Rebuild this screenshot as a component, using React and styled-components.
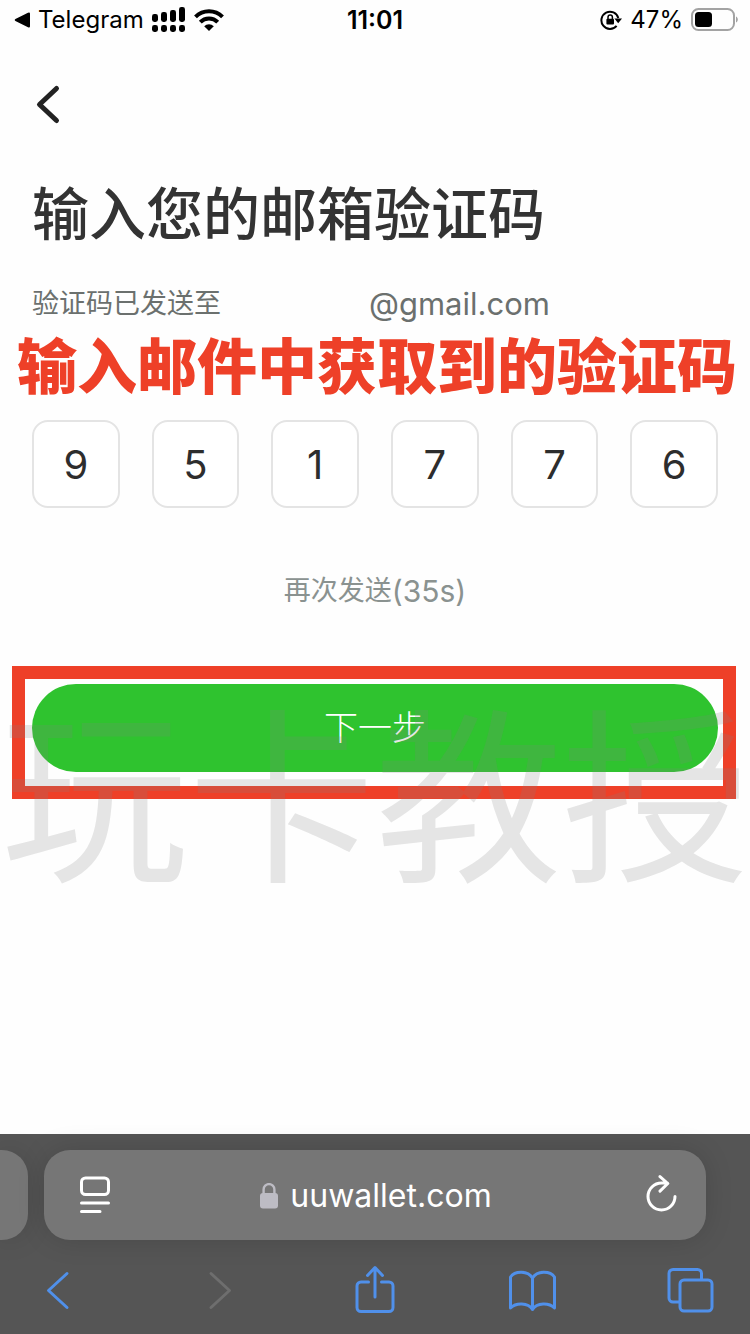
import React, { useState } from "react";
import styled, { createGlobalStyle } from "styled-components";

const GlobalStyle = createGlobalStyle`
  * {
    box-sizing: border-box;
  }

  body {
    margin: 0;
    background: #fefefe;
    font-family: Inter, "Noto Sans CJK SC", sans-serif;
  }

  button {
    padding: 0;
    border: 0;
    background: none;
    font: inherit;
    cursor: pointer;
  }

  svg {
    display: block;
  }
`;

const Screen = styled.div`
  min-height: 100vh;
  display: flex;
  flex-direction: column;
`;

// Status bar
const StatusBar = styled.header`
  display: grid;
  grid-template-columns: 1fr auto 1fr;
  align-items: center;
  height: 40px;
  padding: 0 12px;
  font-size: 24px;
  line-height: 40px;
  color: #000;
`;

const StatusGroup = styled.div`
  display: flex;
  align-items: center;
  justify-content: ${({ $end }) => ($end ? "flex-end" : "flex-start")};
  gap: 8px;
`;

const Clock = styled.time`
  font-size: 25px;
  font-weight: 600;
`;

// Page content
const Content = styled.main`
  position: relative;
  flex: 1;
`;

const BackButton = styled.button`
  display: block;
  margin: 44px 0 0 28px;
  color: #222;
`;

const Title = styled.h1`
  margin: 56px 32px 0;
  font-size: 57px;
  font-weight: 500;
  line-height: 68px;
  color: #333;
`;

const SentTo = styled.p`
  display: flex;
  margin: 35px 32px 0;
  font-size: 27px;
  line-height: 40px;
  color: #6b706e;
`;

const MaskedName = styled.span`
  width: 148px;
`;

const Email = styled.span`
  font-size: 31px;
`;

const Callout = styled.p`
  margin: 13px 0 0 4px;
  text-align: center;
  white-space: nowrap;
  font-size: 60px;
  font-weight: 900;
  line-height: 60px;
  color: #ee4028;
`;

const CodeRow = styled.div`
  display: grid;
  grid-template-columns: repeat(6, 1fr);
  gap: 32px;
  margin: 23px 32px 0;
`;

const CodeInput = styled.input`
  width: 100%;
  height: 88px;
  padding: 0;
  border: 2px solid #e4e4e4;
  border-radius: 16px;
  outline: none;
  background: #fff;
  text-align: center;
  font-family: inherit;
  font-size: 40px;
  color: #2d2d2d;
`;

const Resend = styled.button`
  display: flex;
  margin: 63px auto 0;
  font-size: 27px;
  line-height: 40px;
  color: #8a9290;
`;

const Countdown = styled.span`
  font-size: 30px;
`;

const Highlight = styled.div`
  margin: 55px 14px 0 12px;
  padding: 5px 5px 14px 7px;
  border: 13px solid #ee4028;
`;

const NextButton = styled.button`
  display: block;
  width: 100%;
  height: 88px;
  padding-bottom: 6px;
  border-radius: 44px;
  background: #2fc32f;
  font-size: 34px;
  font-weight: 300;
  color: #fff;
`;

const Watermark = styled.div`
  position: absolute;
  top: 624px;
  left: 0;
  right: 0;
  text-align: center;
  white-space: nowrap;
  font-size: 187px;
  line-height: 272px;
  color: rgba(128, 128, 128, 0.2);
  pointer-events: none;
`;

// Browser bar
const BrowserBar = styled.footer`
  padding: 16px 0 20px;
  background: #555;
`;

const AddressRow = styled.div`
  display: flex;
  gap: 16px;
  padding-right: 44px;
`;

const NextTabEdge = styled.div`
  width: 28px;
  border-radius: 0 26px 26px 0;
  background: #767676;
  box-shadow: 0 0 28px rgba(0, 0, 0, 0.14);
`;

const AddressBar = styled.div`
  flex: 1;
  display: flex;
  align-items: center;
  justify-content: space-between;
  height: 90px;
  padding: 0 27px 0 33px;
  border-radius: 26px;
  background: #767676;
  box-shadow: 0 0 28px rgba(0, 0, 0, 0.14);
`;

const BarButton = styled.button`
  color: #fff;
`;

const Address = styled.button`
  display: flex;
  align-items: center;
  gap: 12px;
  padding: 2px 4px 0 0;
  font-size: 32px;
  line-height: 40px;
  color: #fff;
`;

const Toolbar = styled.nav`
  display: flex;
  justify-content: space-between;
  padding: 24px 36px 0 33px;
`;

const ToolButton = styled.button`
  width: 48px;
  height: 50px;
  color: ${({ disabled }) => (disabled ? "#6e6e6e" : "#5090ea")};
`;

const Stroke = ({ width, height, weight = 3, children }) => (
  <svg
    width={width}
    height={height}
    viewBox={`0 0 ${width} ${height}`}
    fill="none"
    stroke="currentColor"
    strokeWidth={weight}
    strokeLinecap="round"
    strokeLinejoin="round"
    aria-hidden="true"
  >
    {children}
  </svg>
);

const ReturnArrowIcon = () => (
  <svg width="18" height="16" viewBox="0 0 18 16" aria-hidden="true">
    <path d="M3.4 7.1L16 .8q2-.8 2 1v12.4q0 1.8-2 1L3.4 8.9q-1.6-.9 0-1.8z" />
  </svg>
);

const SignalIcon = () => (
  <svg width="34" height="26" viewBox="0 0 34 26" aria-hidden="true">
    {[7, 5, 3, 0].map((top, i) => (
      <g key={top}>
        <rect x={i * 9} y={top} width="6" height={15 - top} rx="2.4" />
        <rect x={i * 9} y="18" width="6" height="7" rx="2.4" />
      </g>
    ))}
  </svg>
);

const WifiIcon = () => (
  <svg width="30" height="22" viewBox="0 0 30 22" aria-hidden="true">
    <g fill="none" stroke="#000" strokeWidth="4">
      <path d="M1.5 7.8a19 19 0 0 1 27 0" />
      <path d="M6.3 13.2a12.2 12.2 0 0 1 17.4 0" />
    </g>
    <path d="M15 22l-4.8-4.8a6.8 6.8 0 0 1 9.6 0z" />
  </svg>
);

const RotationLockIcon = () => (
  <svg width="22" height="22" viewBox="0 0 22 22" aria-hidden="true">
    <path
      d="M16.6 16.8A8.6 8.6 0 1 1 18.3 9"
      fill="none"
      stroke="#000"
      strokeWidth="2"
    />
    <path d="M14.4 9.4H22l-3.8 4.8z" />
    <rect x="6.4" y="9.8" width="7.6" height="5.6" rx="1" />
    <path
      d="M8 10.4V8.2a2.2 2.2 0 0 1 4.4 0v2.2"
      fill="none"
      stroke="#000"
      strokeWidth="1.5"
    />
  </svg>
);

const BatteryIcon = () => (
  <svg width="47" height="24" viewBox="0 0 47 24" aria-hidden="true">
    <rect
      x="1"
      y="1"
      width="42"
      height="21"
      rx="6.5"
      fill="none"
      stroke="#a3a3a3"
      strokeWidth="2"
    />
    <rect x="4" y="4" width="17" height="15" rx="3.5" />
    <path d="M45 8.5c2.4 1 2.4 5 0 6z" fill="#a3a3a3" />
  </svg>
);

const PageIcon = () => (
  <Stroke width={36} height={40}>
    <rect x="4.5" y="3" width="27" height="16.500" rx="4" />
    <path d="M4.5 28h27M4.5 36.500h18.500" />
  </Stroke>
);

const LockIcon = () => (
  <svg width="18" height="27" viewBox="0 0 18 27" aria-hidden="true">
    <rect y="10" width="18" height="15.500" rx="3" fill="#bdbcc4" />
    <path
      d="M3.600 11V6.500a5.400 5.400 0 0 1 10.800 0V11"
      fill="none"
      stroke="#bdbcc4"
      strokeWidth="2.4"
    />
  </svg>
);

const ReloadIcon = () => (
  <Stroke width={36} height={40}>
    <path d="M32 21.500a13.500 13.500 0 1 1-13.500-13.500h6M17 1.600l7.800 6.900-7.800 7.600" />
  </Stroke>
);

const ShareIcon = () => (
  <Stroke width={48} height={50}>
    <path d="M18.5 18H11a4 4 0 0 0-4 4v21.5a4 4 0 0 0 4 4h28a4 4 0 0 0 4-4V22a4 4 0 0 0-4-4h-7.5" />
    <path d="M25 33V4M17.5 11.500L25 3.500l7.500 8" />
  </Stroke>
);

const BookIcon = () => (
  <Stroke width={48} height={50}>
    <path d="M24.5 14v31.5M24.5 14C20 6.500 7 6.500 2.500 13v31C8 38.500 20 38.500 24.500 45.500 29 38.500 41 38.500 46.500 44V13C42 6.500 29 6.500 24.500 14z" />
  </Stroke>
);

const TabsIcon = () => (
  <Stroke width={48} height={50}>
    <rect x="14" y="16" width="32" height="31" rx="4" />
    <path d="M13 38H7a4 4 0 0 1-4-4V9.500a4 4 0 0 1 4-4h24.500a4 4 0 0 1 4 4V15" />
  </Stroke>
);

const App = () => {
  const [code, setCode] = useState(["9", "5", "1", "7", "7", "6"]);

  const handleChange = (index, value) => {
    setCode(code.map((digit, i) => (i === index ? value : digit)));
  };

  return (
    <Screen>
      <GlobalStyle />
      <StatusBar>
        <StatusGroup>
          <ReturnArrowIcon />
          <span>Telegram</span>
          <SignalIcon />
          <WifiIcon />
        </StatusGroup>
        <Clock>11:01</Clock>
        <StatusGroup $end>
          <RotationLockIcon />
          <span>47%</span>
          <BatteryIcon />
        </StatusGroup>
      </StatusBar>

      <Content>
        <BackButton aria-label="返回">
          <Stroke width={40} height={41} weight={5}>
            <path d="M28.5 4.500L11.500 20.500l17 16" />
          </Stroke>
        </BackButton>
        <Title>输入您的邮箱验证码</Title>
        <SentTo>
          验证码已发送至
          <MaskedName />
          <Email>@gmail.com</Email>
        </SentTo>
        <Callout>输入邮件中获取到的验证码</Callout>
        <CodeRow>
          {code.map((digit, i) => (
            <CodeInput
              key={i}
              aria-label={`验证码第${i + 1}位`}
              inputMode="numeric"
              maxLength={1}
              value={digit}
              onChange={(e) => handleChange(i, e.target.value)}
            />
          ))}
        </CodeRow>
        <Resend>
          再次发送<Countdown>(35s)</Countdown>
        </Resend>
        <Highlight>
          <NextButton>下一步</NextButton>
        </Highlight>
        <Watermark>玩卡教授</Watermark>
      </Content>

      <BrowserBar>
        <AddressRow>
          <NextTabEdge />
          <AddressBar>
            <BarButton aria-label="页面菜单">
              <PageIcon />
            </BarButton>
            <Address>
              <LockIcon />
              uuwallet.com
            </Address>
            <BarButton aria-label="重新载入">
              <ReloadIcon />
            </BarButton>
          </AddressBar>
        </AddressRow>
        <Toolbar>
          <ToolButton aria-label="后退">
            <Stroke width={48} height={50}>
              <path d="M34 9.500L15.500 26.500 34 43.500" />
            </Stroke>
          </ToolButton>
          <ToolButton aria-label="前进" disabled>
            <Stroke width={48} height={50}>
              <path d="M20 9.500L38.500 26.500 20 43.500" />
            </Stroke>
          </ToolButton>
          <ToolButton aria-label="分享">
            <ShareIcon />
          </ToolButton>
          <ToolButton aria-label="书签">
            <BookIcon />
          </ToolButton>
          <ToolButton aria-label="标签页">
            <TabsIcon />
          </ToolButton>
        </Toolbar>
      </BrowserBar>
    </Screen>
  );
};

export default App;
